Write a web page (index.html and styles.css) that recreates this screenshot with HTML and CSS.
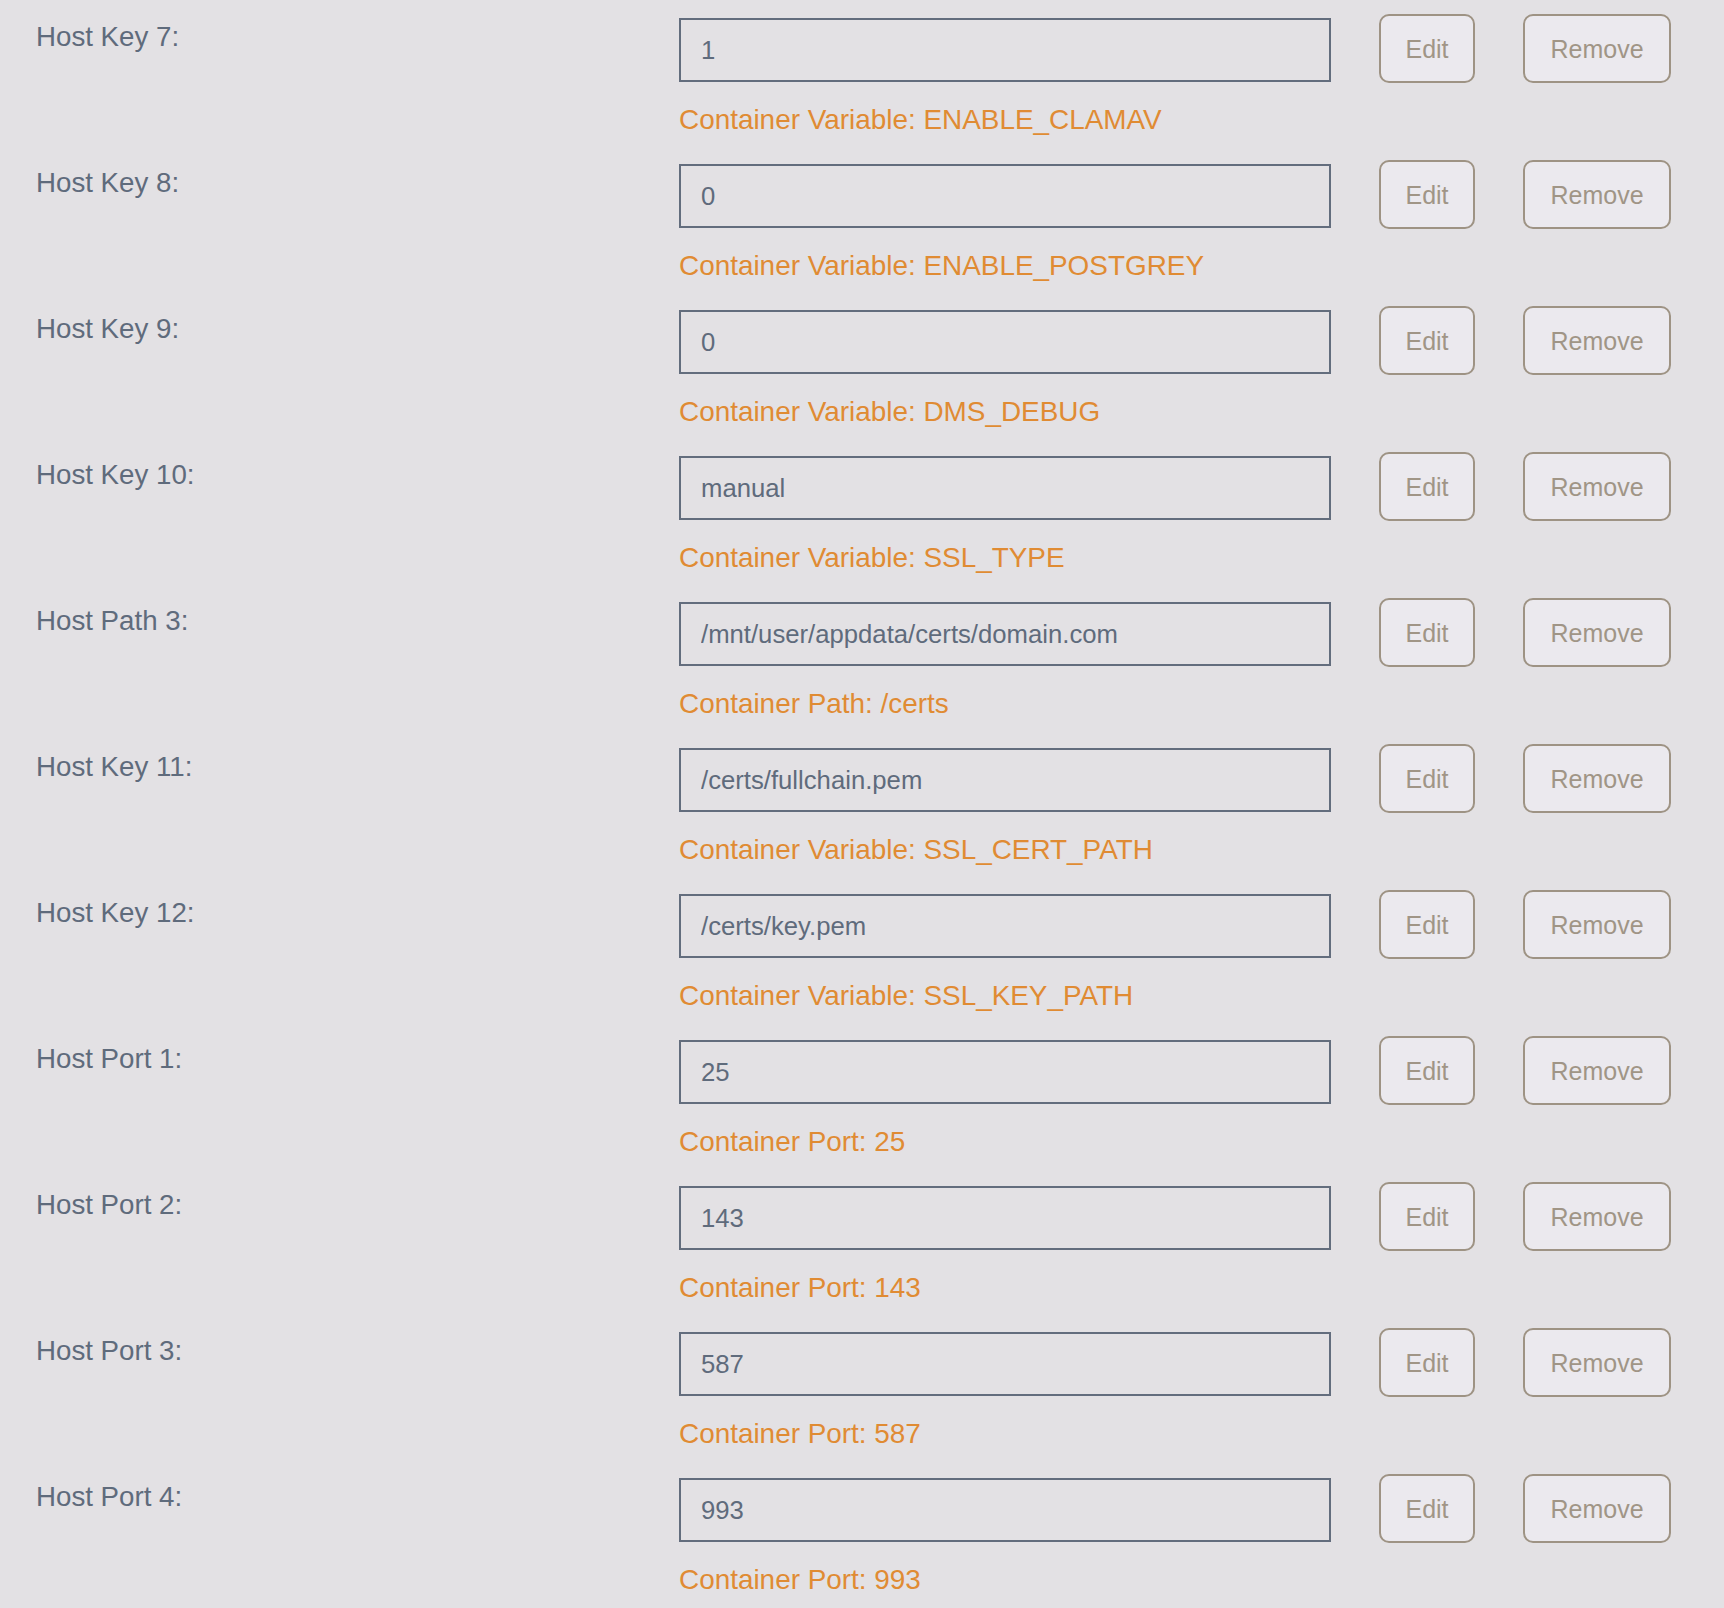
FILE: index.html
```html
<!DOCTYPE html>
<html lang="en">
<head>
<meta charset="utf-8">
<title>Container settings</title>
<link rel="stylesheet" href="styles.css">
</head>
<body>
<div class="list">
  <div class="row">
    <div class="label">Host Key 7:</div>
    <div class="field"><input class="value" type="text" value="1" readonly><div class="desc">Container Variable: ENABLE_CLAMAV</div></div>
    <button class="btn edit">Edit</button><button class="btn remove">Remove</button>
  </div>
  <div class="row">
    <div class="label">Host Key 8:</div>
    <div class="field"><input class="value" type="text" value="0" readonly><div class="desc">Container Variable: ENABLE_POSTGREY</div></div>
    <button class="btn edit">Edit</button><button class="btn remove">Remove</button>
  </div>
  <div class="row">
    <div class="label">Host Key 9:</div>
    <div class="field"><input class="value" type="text" value="0" readonly><div class="desc">Container Variable: DMS_DEBUG</div></div>
    <button class="btn edit">Edit</button><button class="btn remove">Remove</button>
  </div>
  <div class="row">
    <div class="label">Host Key 10:</div>
    <div class="field"><input class="value" type="text" value="manual" readonly><div class="desc">Container Variable: SSL_TYPE</div></div>
    <button class="btn edit">Edit</button><button class="btn remove">Remove</button>
  </div>
  <div class="row">
    <div class="label">Host Path 3:</div>
    <div class="field"><input class="value" type="text" value="/mnt/user/appdata/certs/domain.com" readonly><div class="desc">Container Path: /certs</div></div>
    <button class="btn edit">Edit</button><button class="btn remove">Remove</button>
  </div>
  <div class="row">
    <div class="label">Host Key 11:</div>
    <div class="field"><input class="value" type="text" value="/certs/fullchain.pem" readonly><div class="desc">Container Variable: SSL_CERT_PATH</div></div>
    <button class="btn edit">Edit</button><button class="btn remove">Remove</button>
  </div>
  <div class="row">
    <div class="label">Host Key 12:</div>
    <div class="field"><input class="value" type="text" value="/certs/key.pem" readonly><div class="desc">Container Variable: SSL_KEY_PATH</div></div>
    <button class="btn edit">Edit</button><button class="btn remove">Remove</button>
  </div>
  <div class="row">
    <div class="label">Host Port 1:</div>
    <div class="field"><input class="value" type="text" value="25" readonly><div class="desc">Container Port: 25</div></div>
    <button class="btn edit">Edit</button><button class="btn remove">Remove</button>
  </div>
  <div class="row">
    <div class="label">Host Port 2:</div>
    <div class="field"><input class="value" type="text" value="143" readonly><div class="desc">Container Port: 143</div></div>
    <button class="btn edit">Edit</button><button class="btn remove">Remove</button>
  </div>
  <div class="row">
    <div class="label">Host Port 3:</div>
    <div class="field"><input class="value" type="text" value="587" readonly><div class="desc">Container Port: 587</div></div>
    <button class="btn edit">Edit</button><button class="btn remove">Remove</button>
  </div>
  <div class="row">
    <div class="label">Host Port 4:</div>
    <div class="field"><input class="value" type="text" value="993" readonly><div class="desc">Container Port: 993</div></div>
    <button class="btn edit">Edit</button><button class="btn remove">Remove</button>
  </div>
</div>
</body>
</html>
```
FILE: styles.css
```css
html, body {
  margin: 0;
  padding: 0;
  background: #e3e1e4;
}
body {
  font-family: "Liberation Sans", Arial, sans-serif;
  color: #5f6b7c;
}
.list {
  display: flex;
  flex-direction: column;
  padding: 0 52px 0 36px;
}
.row {
  display: flex;
  align-items: flex-start;
  height: 146px;
}
.label {
  flex: 0 0 643px;
  margin-top: 21px;
  font-size: 27.7px;
  line-height: 32px;
  color: #5f6b7c;
}
.field {
  flex: 0 0 652px;
  display: flex;
  flex-direction: column;
  margin-top: 18px;
}
.value {
  box-sizing: border-box;
  width: 652px;
  height: 64px;
  margin: 0;
  padding: 0 19px 0 20px;
  border: 2px solid #636d7d;
  border-radius: 0;
  background: transparent;
  font-family: "Liberation Sans", Arial, sans-serif;
  font-size: 25.7px;
  color: #5f6b7c;
  outline: none;
}
.desc {
  margin-top: 22px;
  font-size: 27.9px;
  line-height: 32px;
  color: #e08b33;
  white-space: nowrap;
}
.btn {
  box-sizing: border-box;
  flex: 0 0 auto;
  margin-top: 14px;
  margin-left: 48px;
  height: 69px;
  padding: 2px 0 0;
  border: 2px solid #9e9384;
  border-radius: 10px;
  background: #ebe9ee;
  font-family: "Liberation Sans", Arial, sans-serif;
  font-size: 25px;
  color: #a09586;
  text-align: center;
  cursor: pointer;
}
.edit {
  width: 96px;
}
.remove {
  width: 148px;
}
```
